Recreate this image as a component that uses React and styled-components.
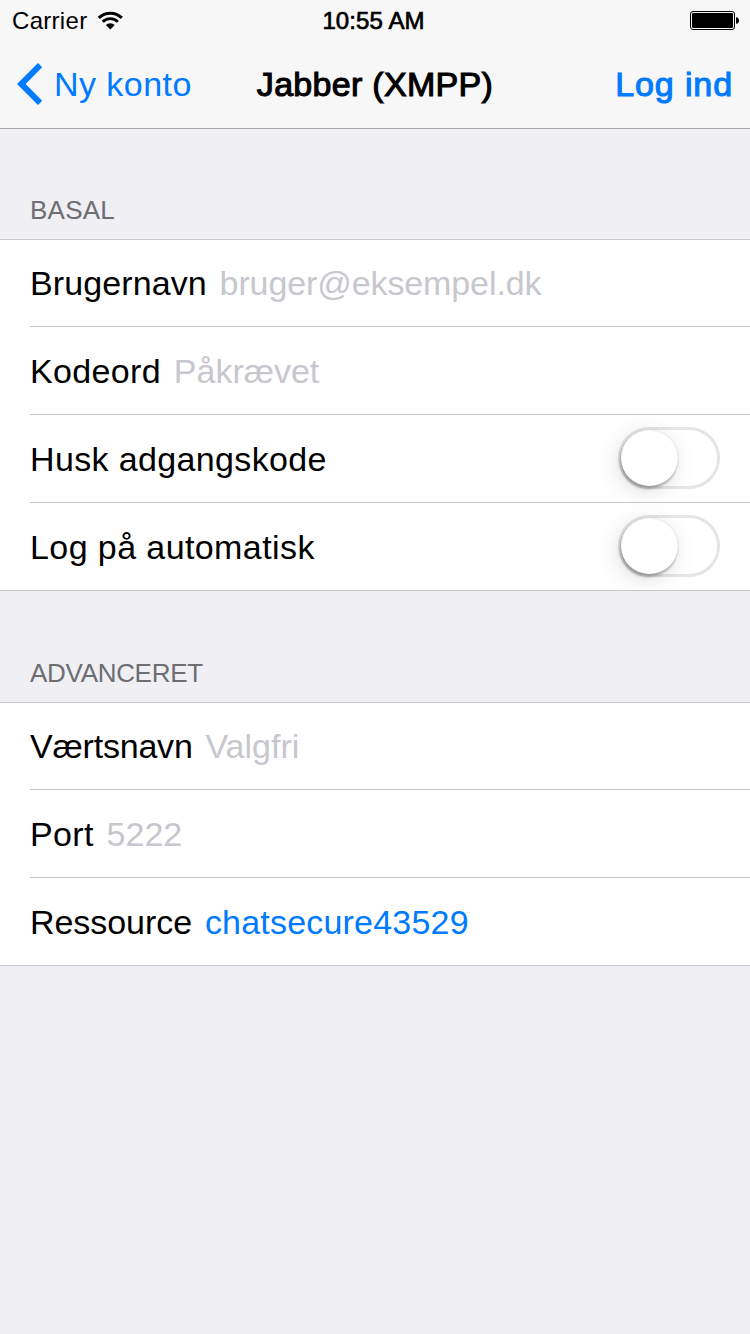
import React from "react";
import styled, { createGlobalStyle } from "styled-components";

const GlobalStyle = createGlobalStyle`
  * { box-sizing: border-box; }
  body {
    margin: 0;
    background: #efeff4;
    font-family: "Liberation Sans", Arial, sans-serif;
    color: #000;
  }
`;

const Screen = styled.main`
  width: 750px;
  min-height: 1334px;
  background: #efeff4;
  overflow: hidden;
`;

const TopBar = styled.header`
  height: 129px;
  background: #f7f7f7;
  border-bottom: 1px solid #a7a7ab;
`;

const StatusBar = styled.div`
  display: grid;
  grid-template-columns: 1fr auto 1fr;
  align-items: center;
  height: 40px;
  padding: 2px 11px 0 12px;
  font-size: 24px;
  line-height: 28px;
`;

const Text = styled.span`
  display: block;
  white-space: nowrap;
  letter-spacing: ${(p) => p.$track || 0}px;
  -webkit-text-stroke: ${(p) => p.$stroke || 0}px currentColor;
`;

const Clock = styled(Text)`
  margin: 0 4px 0 0;
`;

const Carrier = styled.div`
  display: flex;
  align-items: center;
  gap: 10px;

  svg { margin-bottom: 2px; }
`;

const BatterySlot = styled.div`
  display: flex;
  justify-content: flex-end;
  padding-bottom: 1px;
`;

const NavBar = styled.nav`
  display: grid;
  grid-template-columns: 1fr auto 1fr;
  align-items: center;
  height: 88px;
  padding: 0 17px;
  font-size: 34px;
  line-height: 40px;
`;

const NavTitle = styled(Text)`
  margin: 0;
  font: inherit;
`;

const NavButton = styled.button`
  display: flex;
  align-items: center;
  justify-self: ${(p) => (p.$end ? "end" : "start")};
  gap: 11px;
  padding: 0;
  border: 0;
  background: none;
  color: #007aff;
  font: inherit;
`;

const SectionTitle = styled.h2`
  display: flex;
  align-items: flex-end;
  height: ${(p) => p.$height}px;
  margin: 0;
  padding: 0 30px 14px;
  color: #6d6d72;
  font-size: 26px;
  line-height: 30px;
  font-weight: 400;
`;

const Group = styled.div`
  background: #fff;
  border-top: 1px solid #c8c7cc;
  border-bottom: 1px solid #c8c7cc;
  overflow: hidden;
`;

const Row = styled.div`
  display: flex;
  align-items: flex-end;
  gap: 12.8px;
  height: 88px;
  margin-left: 30px;
  padding: 0 30px 23px 0;
  border-bottom: 1px solid #c8c7cc;
  font-size: 34px;
  line-height: 40px;

  &:first-child { height: 87px; }
  &:last-child { height: 87px; border-bottom: 0; }
`;

const Value = styled(Text)`
  color: ${(p) => (p.$filled ? "#007aff" : "#c7c7cd")};
`;

const Toggle = styled.button`
  flex: none;
  width: 102px;
  height: 62px;
  margin: 0 0 -10px auto;
  padding: 0;
  border: 3px solid #e5e5e5;
  border-radius: 31px;
  background: #fff;
`;

const Knob = styled.span`
  display: block;
  width: 56.5px;
  height: 56.5px;
  margin-top: -0.5px;
  border-radius: 50%;
  background: #fff;
  box-shadow: 0 0 1px rgba(0, 0, 0, 0.25), -1px 3px 3px rgba(0, 0, 0, 0.27),
    -3px 5px 22px rgba(0, 0, 0, 0.13);
`;

const WifiIcon = () => (
  <svg width="26" height="19" viewBox="0 0 26 19" fill="none" stroke="#000">
    <path d="M1.8 6.9a16.4 16.4 0 0 1 23 0" strokeWidth="3.1" />
    <path d="M5.7 10.8a10.8 10.8 0 0 1 15.2 0" strokeWidth="2.9" />
    <path d="M13.3 18.4l-4.4-4.3a6.2 6.2 0 0 1 8.8 0z" fill="#000" stroke="none" />
  </svg>
);

const BatteryIcon = () => (
  <svg width="49" height="19" viewBox="0 0 49 19">
    <rect x="0.5" y="0.5" width="44" height="18" rx="2.5" fill="none" stroke="#000" />
    <rect x="2" y="2" width="41" height="15" rx="1.2" />
    <path d="M46 6.2c2 0 3 1.4 3 3.3s-1 3.3-3 3.3z" />
  </svg>
);

const BackIcon = () => (
  <svg width="26" height="42" viewBox="0 0 26 42" fill="#007aff">
    <path d="M0 21L21 0L25.2 4.2L8.6 21L25.2 37.8L21 42Z" />
  </svg>
);

const sections = [
  {
    title: "BASAL",
    track: 0.25,
    height: 110,
    rows: [
      { label: "Brugernavn", track: 0.1, value: "bruger@eksempel.dk", valueTrack: -0.1 },
      { label: "Kodeord", track: 0.35, value: "Påkrævet", valueTrack: 0 },
      { label: "Husk adgangskode", track: 0.36, toggle: true },
      { label: "Log på automatisk", track: 0.41, toggle: true },
    ],
  },
  {
    title: "ADVANCERET",
    track: -0.3,
    height: 111,
    rows: [
      { label: "Værtsnavn", track: -0.2, value: "Valgfri", valueTrack: 0 },
      { label: "Port", track: 0.35, value: "5222", valueTrack: 0 },
      { label: "Ressource", track: -0.05, value: "chatsecure43529", valueTrack: 0.2, filled: true },
    ],
  },
];

export default function App() {
  return (
    <Screen>
      <GlobalStyle />
      <TopBar>
        <StatusBar>
          <Carrier>
            <Text $track={0.3}>Carrier</Text>
            <WifiIcon />
          </Carrier>
          <Clock $track={0.1} $stroke={0.7}>10:55 AM</Clock>
          <BatterySlot>
            <BatteryIcon />
          </BatterySlot>
        </StatusBar>
        <NavBar>
          <NavButton>
            <BackIcon />
            <Text $track={0.45}>Ny konto</Text>
          </NavButton>
          <NavTitle as="h1" $track={0.3} $stroke={1.1}>Jabber (XMPP)</NavTitle>
          <NavButton $end>
            <Text $track={0.9} $stroke={1.1}>Log ind</Text>
          </NavButton>
        </NavBar>
      </TopBar>
      {sections.map((section) => (
        <section key={section.title}>
          <SectionTitle $height={section.height}>
            <Text $track={section.track}>{section.title}</Text>
          </SectionTitle>
          <Group>
            {section.rows.map((row) => (
              <Row key={row.label}>
                <Text $track={row.track}>{row.label}</Text>
                {row.value && (
                  <Value $track={row.valueTrack} $filled={row.filled}>
                    {row.value}
                  </Value>
                )}
                {row.toggle && (
                  <Toggle aria-label={row.label}>
                    <Knob />
                  </Toggle>
                )}
              </Row>
            ))}
          </Group>
        </section>
      ))}
    </Screen>
  );
}
